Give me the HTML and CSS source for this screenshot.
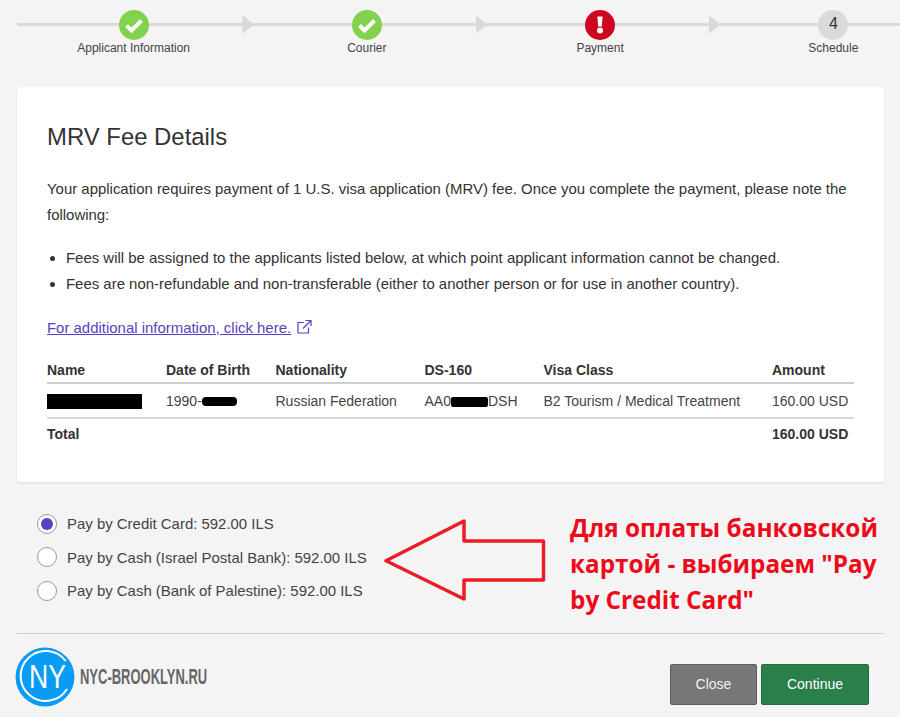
FILE: index.html
```html
<!DOCTYPE html>
<html lang="en">
<head>
<meta charset="utf-8">
<title>MRV Fee Details</title>
<link rel="stylesheet" href="styles.css">
</head>
<body>
<div class="page">
  <ol class="stepper">
    <li class="step">
      <span class="dot dot-done"><svg width="30" height="30" viewBox="0 0 30 30"><path d="M7.500 15.500l5 5 10-10" fill="none" stroke="#fff" stroke-width="4"/></svg></span>
      <span class="step-label">Applicant Information</span>
      <span class="chevron"></span>
    </li>
    <li class="step">
      <span class="dot dot-done"><svg width="30" height="30" viewBox="0 0 30 30"><path d="M7.500 15.500l5 5 10-10" fill="none" stroke="#fff" stroke-width="4"/></svg></span>
      <span class="step-label">Courier</span>
      <span class="chevron"></span>
    </li>
    <li class="step">
      <span class="dot dot-error"><svg width="30" height="30" viewBox="0 0 30 30"><path d="M12.400 6.500h5.200l-.8 10h-3.600z" fill="#fff"/><circle cx="15" cy="20.500" r="3" fill="#fff"/></svg></span>
      <span class="step-label">Payment</span>
      <span class="chevron"></span>
    </li>
    <li class="step">
      <span class="dot dot-todo">4</span>
      <span class="step-label">Schedule</span>
    </li>
  </ol>

  <section class="card">
    <h1 class="card-title">MRV Fee Details</h1>
    <p class="intro">Your application requires payment of 1 U.S. visa application (MRV) fee. Once you complete the payment, please note the following:</p>
    <ul class="notes">
      <li>Fees will be assigned to the applicants listed below, at which point applicant information cannot be changed.</li>
      <li>Fees are non-refundable and non-transferable (either to another person or for use in another country).</li>
    </ul>
    <p class="more"><a class="more-link" href="#">For additional information, click here.</a>
      <svg class="ext" width="16" height="16" viewBox="0 0 16 16"><path d="M8 3.500H2v10.500h10.500V8.500M7 9.500L14.500 2M9.500 1.500h5.500v5.500" fill="none" stroke="#5a3fc0" stroke-width="1.200"/></svg>
    </p>
    <table class="fees">
      <thead>
        <tr>
          <th class="c-name">Name</th>
          <th class="c-dob">Date of Birth</th>
          <th class="c-nat">Nationality</th>
          <th class="c-ds">DS-160</th>
          <th class="c-visa">Visa Class</th>
          <th class="c-amt">Amount</th>
        </tr>
      </thead>
      <tbody>
        <tr>
          <td><span class="redact redact-name"></span></td>
          <td>1990-<span class="redact redact-dob"></span></td>
          <td>Russian Federation</td>
          <td>AA0<span class="redact redact-ds"></span>DSH</td>
          <td>B2 Tourism / Medical Treatment</td>
          <td>160.00 USD</td>
        </tr>
      </tbody>
      <tfoot>
        <tr>
          <td colspan="5">Total</td>
          <td>160.00 USD</td>
        </tr>
      </tfoot>
    </table>
  </section>

  <div class="options">
    <label class="option"><span class="radio radio-on"></span>Pay by Credit Card: 592.00 ILS</label>
    <label class="option"><span class="radio"></span>Pay by Cash (Israel Postal Bank): 592.00 ILS</label>
    <label class="option"><span class="radio"></span>Pay by Cash (Bank of Palestine): 592.00 ILS</label>
    <svg class="big-arrow" width="164" height="84" viewBox="0 0 164 84"><path d="M3 42.700L81 3v20h79.500v39H81v19z" fill="none" stroke="#ec1c24" stroke-width="3.500" stroke-linejoin="round"/></svg>
    <p class="note">Для оплаты банковской картой - выбираем "Pay by Credit Card"</p>
  </div>

  <footer class="actions">
    <div class="brand">
      <svg class="brand-mark" width="60" height="60" viewBox="0 0 60 60">
        <circle cx="30" cy="30" r="29.500" fill="#0a9bf5"/>
        <path d="M50.700 14A25 25 0 1 0 52 42" fill="none" stroke="#fff" stroke-width="2"/>
        <text class="brand-ny" x="14" y="41" textLength="37" lengthAdjust="spacingAndGlyphs">NY</text>
      </svg>
      <span class="brand-name">NYC-BROOKLYN.RU</span>
    </div>
    <div class="buttons">
      <button class="btn btn-close" type="button">Close</button>
      <button class="btn btn-go" type="button">Continue</button>
    </div>
  </footer>
</div>
</body>
</html>
```
FILE: styles.css
```css
* { box-sizing: border-box; }
html, body { margin: 0; padding: 0; overflow: hidden; }
body {
  background: #f4f4f4;
  color: #333;
  font-family: "Liberation Sans", Arial, sans-serif;
  font-size: 14px;
}
.page {
  width: 900px;
  height: 717px;
  padding: 0 16px 0 17px;
  overflow: hidden;
}

/* Stepper */
.stepper {
  list-style: none;
  margin: 0;
  padding: 10px 0 0;
  display: grid;
  grid-template-columns: repeat(4, 233.25px);
  height: 87px;
}
.step {
  position: relative;
  display: flex;
  flex-direction: column;
  align-items: center;
}
.step::before {
  content: "";
  position: absolute;
  left: 0;
  right: 0;
  top: 13px;
  height: 3px;
  background: #dadada;
}
.dot {
  position: relative;
  width: 30px;
  height: 30px;
  border-radius: 50%;
  display: flex;
  align-items: center;
  justify-content: center;
  font-size: 16px;
  color: #333;
}
.dot-done { background: #82d14f; }
.dot-error { background: #d0051f; }
.dot-todo { background: #dadada; padding-bottom: 3px; }
.step-label {
  margin-top: 1px;
  font-size: 12px;
  line-height: 15px;
  color: #444;
}
.chevron {
  position: absolute;
  top: 5px;
  right: -4px;
  width: 12px;
  height: 19px;
  background: #d9d9d9;
  clip-path: polygon(0 0, 100% 50%, 0 100%);
}

/* Card */
.card {
  width: 867px;
  height: 395px;
  padding: 36px 30px 0;
  background: #fff;
  border-radius: 3px;
  box-shadow: 0 1px 2px rgba(0, 0, 0, 0.1);
}
.card-title {
  margin: 0;
  font-size: 23.900px;
  font-weight: 400;
  line-height: 28px;
  color: #333;
}
.intro {
  margin: 25px 0 0;
  font-size: 14.950px;
  line-height: 26px;
}
.notes {
  margin: 17px 0 0;
  padding: 0 0 0 19px;
  font-size: 14.950px;
  line-height: 26px;
}
.more {
  margin: 17px 0 0;
  display: flex;
  align-items: center;
  gap: 5px;
  height: 26px;
  font-size: 14.950px;
}
.more-link { color: #5a3fc0; text-decoration: underline; }

/* Table */
.fees {
  margin-top: 17px;
  width: 807px;
  table-layout: fixed;
  border-collapse: collapse;
  font-size: 14px;
}
.fees th, .fees td {
  padding: 0;
  text-align: left;
  font-weight: 400;
}
.fees th {
  height: 26px;
  font-weight: 700;
  vertical-align: middle;
  border-bottom: 2px solid #cfcfcf;
}
.fees tbody td {
  height: 35px;
  border-bottom: 2px solid #d6d6d6;
  color: #444;
}
.fees tfoot td { height: 31px; font-weight: 700; }
.c-name { width: 119px; }
.c-dob { width: 109.500px; }
.c-nat { width: 149px; }
.c-ds { width: 119px; }
.c-visa { width: 228.500px; }
.redact { display: inline-block; background: #000; vertical-align: -2px; }
.redact-name { width: 95px; height: 15px; vertical-align: -3px; }
.redact-dob { width: 35px; height: 9px; border-radius: 4px; vertical-align: 0; }
.redact-ds { width: 37px; height: 10px; border-radius: 2px; vertical-align: -1px; }

/* Payment options */
.options {
  position: relative;
  height: 152px;
  padding-top: 25px;
  border-bottom: 1px solid #cfcfcf;
}
.option {
  display: flex;
  align-items: center;
  gap: 10px;
  height: 33.500px;
  padding-left: 20px;
  font-size: 14.950px;
  color: #444;
}
.radio {
  width: 20px;
  height: 20px;
  border: 1px solid #999;
  border-radius: 50%;
  background: #fff;
  display: flex;
  align-items: center;
  justify-content: center;
}
.radio-on::after {
  content: "";
  width: 12px;
  height: 12px;
  border-radius: 50%;
  background: #5a3fc0;
}
.big-arrow {
  position: absolute;
  left: 366px;
  top: 36px;
}
.note {
  position: absolute;
  left: 553px;
  top: 28px;
  width: 320px;
  margin: 0;
  font-family: "Open Sans", "Noto Sans", sans-serif;
  font-size: 24.300px;
  font-weight: 700;
  line-height: 36px;
  color: #ec0b1a;
}

/* Footer */
.actions {
  display: flex;
  justify-content: space-between;
  width: 867px;
}
.brand {
  display: flex;
  align-items: center;
  gap: 5px;
  margin-top: 13px;
  height: 60px;
  margin-left: -2px;
}
.brand-ny {
  font-family: "Liberation Sans", sans-serif;
  font-size: 34px;
  fill: #fff;
}
.brand-name {
  display: inline-block;
  font-size: 22px;
  font-weight: 700;
  color: #666;
  white-space: nowrap;
  transform: scaleX(0.59);
  transform-origin: left center;
}
.buttons {
  display: flex;
  gap: 4px;
  margin: 30px 15px 0 0;
}
.btn {
  height: 41px;
  padding-bottom: 3px;
  border: 1px solid #5c5c5c;
  border-radius: 2px;
  color: #fff;
  font-family: "Liberation Sans", sans-serif;
  font-size: 14px;
}
.btn-close { width: 87px; background: #777; color: #f0f0f0; }
.btn-go { width: 108px; background: #2a7f4b; border-color: #1f6f3e; }
```
